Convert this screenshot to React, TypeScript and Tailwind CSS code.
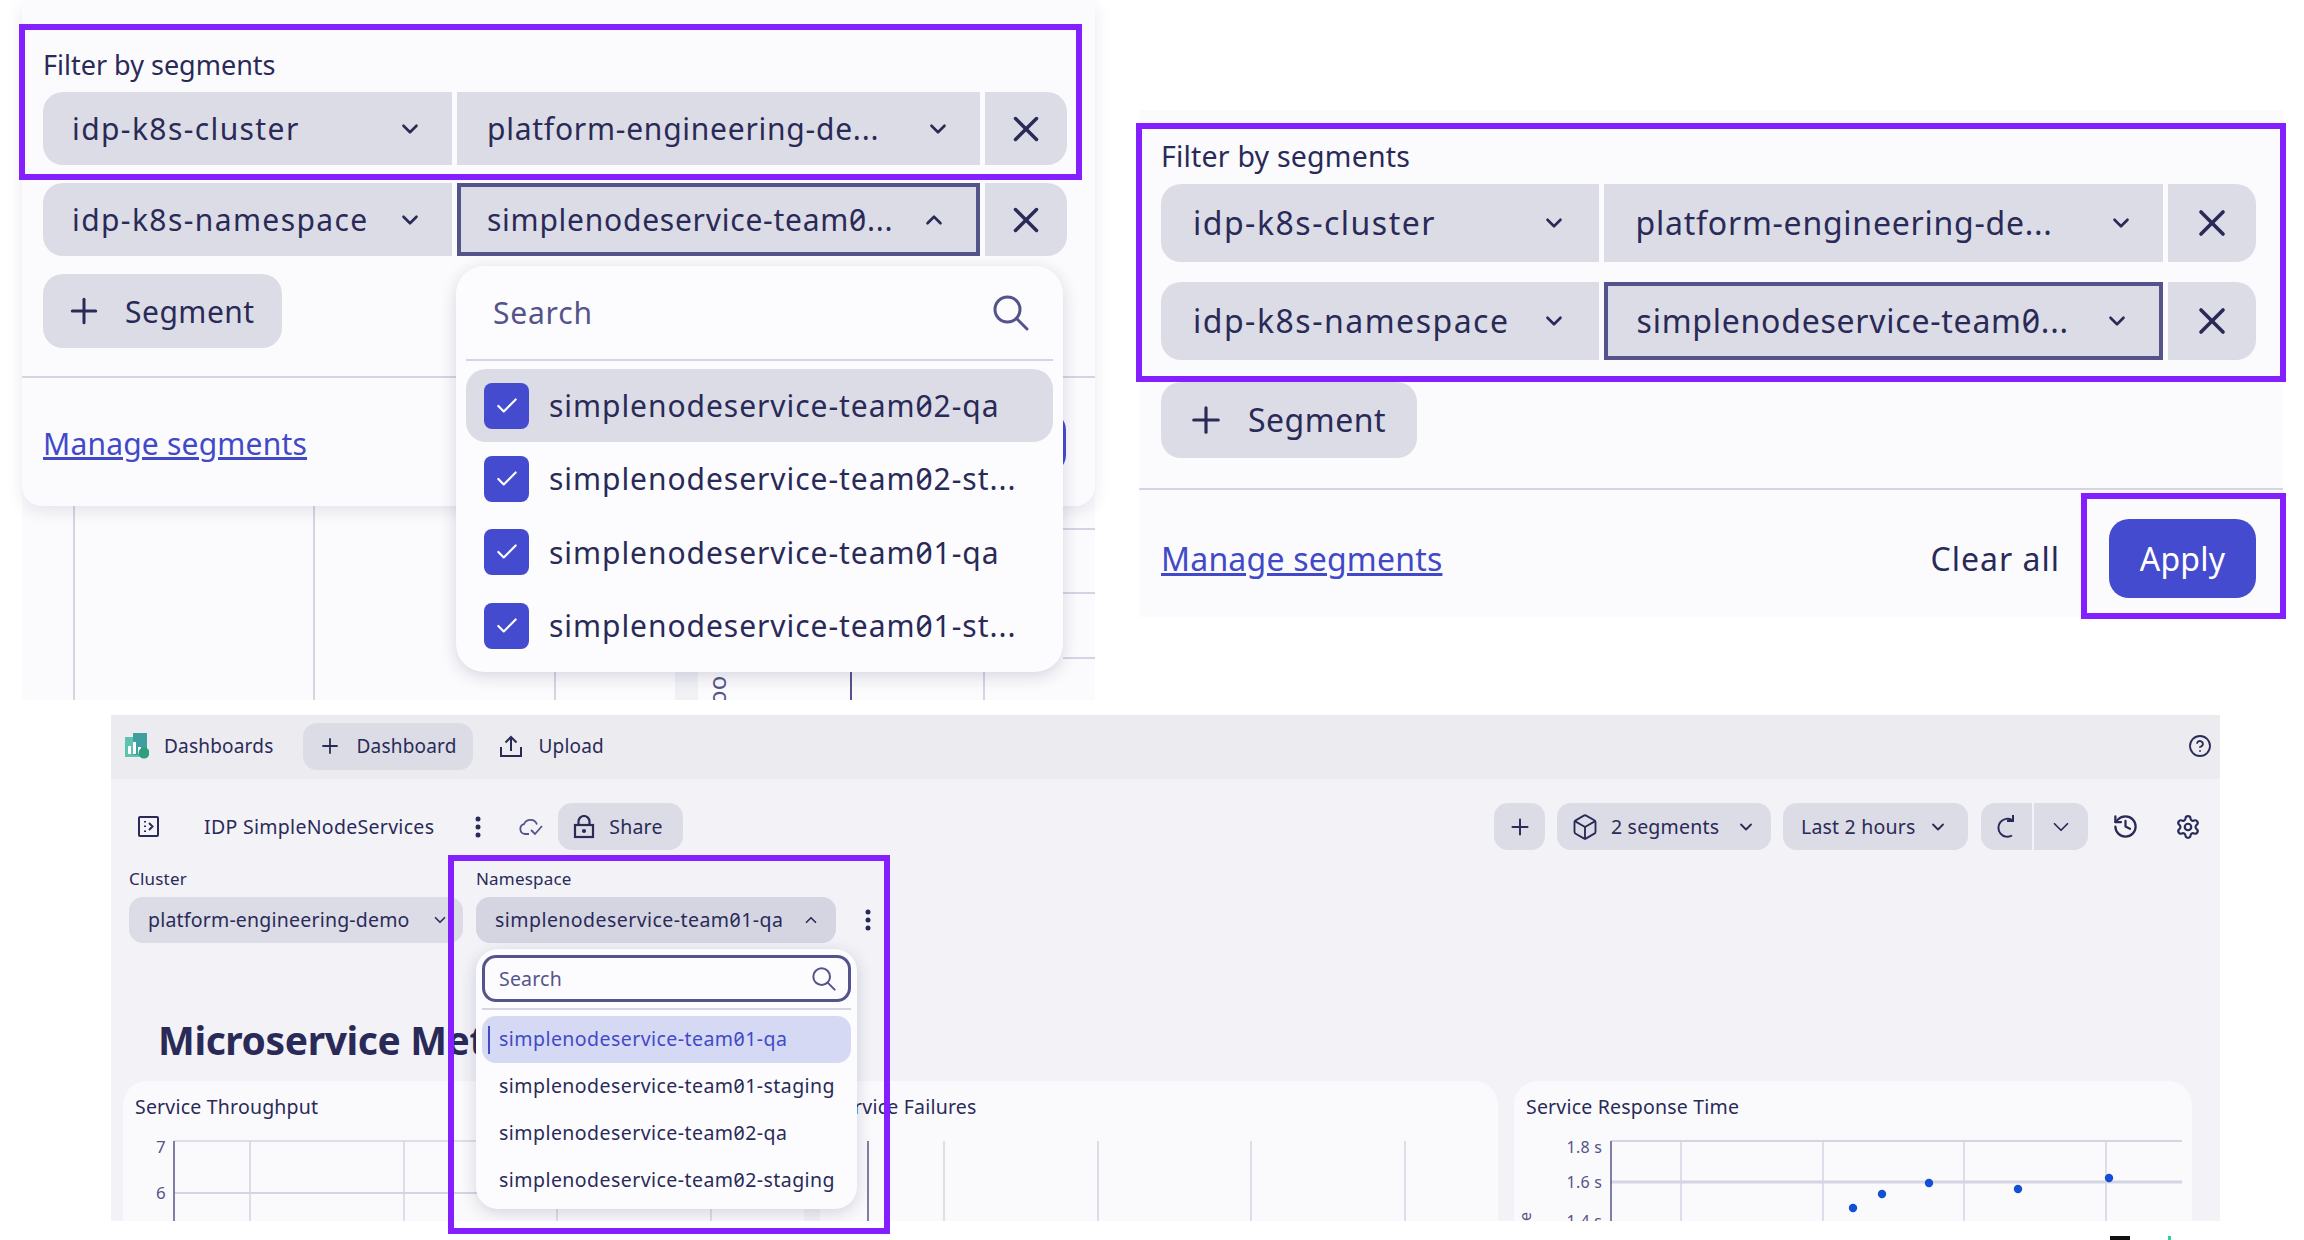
import { Box, Check, ChevronDown, ChevronUp, CircleHelp, History, Plus, Settings, X } from "lucide-react";

const ink = "text-[#2a2a58]";

function SearchIcon({ size }: { size: number }) {
  return (
    <svg width={size} height={size} viewBox="0 0 36 36" fill="none" stroke="currentColor" strokeWidth="3" strokeLinecap="round">
      <circle cx="14.5" cy="14.5" r="12.5" />
      <path d="M23.5 23.5L34 34" />
    </svg>
  );
}

function Dots() {
  return (
    <svg width="8" height="26" viewBox="0 0 8 26" fill="currentColor">
      <circle cx="4" cy="5" r="2.5" />
      <circle cx="4" cy="13" r="2.5" />
      <circle cx="4" cy="21" r="2.5" />
    </svg>
  );
}

function SegmentRow({ name, value, active, open, big }: { name: string; value: string; active?: boolean; open?: boolean; big?: boolean }) {
  const Chevron = open ? ChevronUp : ChevronDown;
  return (
    <div className={big ? "flex h-[78px] gap-[5px]" : "flex h-[73px] gap-[5px]"}>
      <div className={big ? "flex w-[438px] items-center justify-between rounded-l-[20px] bg-[#dcdce6] pl-[32px] pr-[32px]" : "flex w-[409px] items-center justify-between rounded-l-[20px] bg-[#dcdce6] pl-[29px] pr-[29px]"}>
        <span className={big ? "tracking-[1.5px]" : "tracking-[1.4px]"}>{name}</span>
        <ChevronDown size={26} strokeWidth={2.4} />
      </div>
      <div
        className={
          (big ? "w-[560px] pr-[29px] " : "w-[523px] pr-[29px] ") +
          "flex items-center justify-between bg-[#dcdce6] " +
          (active ? (big ? "border-[4px] border-[#54548a] pl-[29px]" : "border-[4px] border-[#54548a] pl-[26px]") : big ? "pl-[32px]" : "pl-[30px]")
        }
      >
        <span className="tracking-[0.75px]">{value}</span>
        <Chevron size={26} strokeWidth={2.4} />
      </div>
      <div className={big ? "flex w-[88px] items-center justify-center rounded-r-[20px] bg-[#dcdce6]" : "flex w-[82px] items-center justify-center rounded-r-[20px] bg-[#dcdce6]"}>
        <X size={big ? 44 : 42} strokeWidth={2} />
      </div>
    </div>
  );
}

function LeftChartLines() {
  return (
    <svg className="absolute left-0 top-[490px]" width="1073" height="210" viewBox="0 0 1073 210">
      <rect x="0" y="0" width="1073" height="210" fill="#fbfbfd" />
      <rect x="653" y="180" width="23" height="30" fill="#f0f0f5" />
      <g stroke="#d4d4e4" strokeWidth="2">
        <line x1="52" y1="0" x2="52" y2="210" />
        <line x1="292" y1="0" x2="292" y2="210" />
        <line x1="533" y1="0" x2="533" y2="210" />
        <line x1="962" y1="0" x2="962" y2="210" />
        <line x1="1041" y1="39" x2="1073" y2="39" />
        <line x1="1041" y1="103" x2="1073" y2="103" />
        <line x1="1041" y1="168" x2="1073" y2="168" />
      </g>
      <line x1="829" y1="0" x2="829" y2="210" stroke="#54548a" strokeWidth="2" />
      <text transform="translate(704 215) rotate(-90)" fontSize="24" fill="#54548a">
        oo
      </text>
    </svg>
  );
}

function LeftPanel() {
  return (
    <div className={"relative h-[700px] w-[1073px] text-[30px] tracking-[0.2px] " + ink}>
      <LeftChartLines />
      <div className="relative flex h-[506px] flex-col rounded-b-[20px] bg-[#fbfbfd] shadow-[0_6px_16px_rgba(40,40,90,0.1)]">
        <div className="flex flex-col pl-[21px] pr-[28px] pt-[45px]">
          <div className="mb-[7px] text-[27px] leading-[40px] tracking-[0px]">Filter by segments</div>
          <div className="flex flex-col gap-[18px]">
            <SegmentRow name="idp-k8s-cluster" value="platform-engineering-de..." />
            <SegmentRow name="idp-k8s-namespace" value="simplenodeservice-team0..." active open />
          </div>
          <div className="mt-[18px] flex h-[74px] w-[239px] items-center gap-[21px] rounded-[20px] bg-[#dcdce6] pl-[21px]">
            <Plus size={40} strokeWidth={1.8} />
            <span className="tracking-[0.5px]">Segment</span>
          </div>
        </div>
        <div className="mt-[28px] h-[2px] bg-[#d4d4e4]" />
        <div className="flex flex-1 items-center pl-[21px] pt-[2px]">
          <a className="text-[#4249c9] underline">Manage segments</a>
        </div>
        <div className="absolute left-[1020px] top-[412px] h-[61px] w-[24px] rounded-r-[18px] bg-[#454bcf]" />
      </div>
      <div className="absolute left-[434px] top-[266px] flex h-[406px] w-[607px] flex-col rounded-[28px] bg-[#fcfcfe] shadow-[0_4px_16px_rgba(40,40,90,0.18)]">
        <div className="flex h-[93px] items-center justify-between pl-[37px] pr-[34px] text-[#54548a]">
          <span className="tracking-[0.8px]">Search</span>
          <SearchIcon size={36} />
        </div>
        <div className="mx-[10px] h-[2px] bg-[#d4d4e4]" />
        <div className="mx-[6px] mt-[8px] flex flex-col">
          {["simplenodeservice-team02-qa", "simplenodeservice-team02-st...", "simplenodeservice-team01-qa", "simplenodeservice-team01-st..."].map((item, i) => (
            <div key={item} className={(i === 0 ? "bg-[#dcdce6] " : "") + "mx-[4px] flex h-[73.3px] items-center gap-[20px] rounded-[20px] pl-[18px]"}>
              <span className="flex h-[46px] w-[45px] items-center justify-center rounded-[8px] bg-[#454bcf]">
                <Check size={26} color="#ffffff" strokeWidth={2} />
              </span>
              <span className="tracking-[0.95px]">{item}</span>
            </div>
          ))}
        </div>
      </div>
    </div>
  );
}

function RightPanel() {
  return (
    <div className={"mt-[110px] flex h-[507px] w-[1144px] flex-col bg-[#fbfbfd] text-[32px] tracking-[0.2px] " + ink}>
      <div className="flex flex-col pl-[22px] pr-[27px] pt-[26px]">
        <div className="mb-[8px] text-[28.5px] leading-[40px]">Filter by segments</div>
        <div className="flex flex-col gap-[20px]">
          <SegmentRow big name="idp-k8s-cluster" value="platform-engineering-de..." />
          <SegmentRow big name="idp-k8s-namespace" value="simplenodeservice-team0..." active />
        </div>
        <div className="mt-[22px] flex h-[76px] w-[256px] items-center gap-[21px] rounded-[20px] bg-[#dcdce6] pl-[24px]">
          <Plus size={42} strokeWidth={1.8} />
          <span className="tracking-[0.5px]">Segment</span>
        </div>
      </div>
      <div className="mt-[30px] h-[2px] bg-[#d4d4e4]" />
      <div className="flex flex-1 items-center justify-between pl-[22px] pr-[27px] pt-[10px]">
        <a className="text-[#4249c9] underline">Manage segments</a>
        <div className="flex items-center gap-[49px]">
          <span className="tracking-[1px]">Clear all</span>
          <button className="h-[79px] w-[147px] rounded-[20px] bg-[#454bcf] text-[#ffffff]">Apply</button>
        </div>
      </div>
    </div>
  );
}

function ToolButton({ children, className }: { children: React.ReactNode; className: string }) {
  return <div className={"flex h-[47px] items-center rounded-[14px] bg-[#dcdce6] " + className}>{children}</div>;
}

function ThroughputChart() {
  return (
    <svg className="absolute left-0 top-0" width="681" height="140" viewBox="0 0 681 140">
      <g stroke="#d4d4e4" strokeWidth="1.5">
        <line x1="51" y1="60" x2="681" y2="60" />
        <line x1="51" y1="112" x2="681" y2="112" strokeWidth="2" />
        <line x1="127" y1="60" x2="127" y2="140" />
        <line x1="281" y1="60" x2="281" y2="140" />
        <line x1="434" y1="60" x2="434" y2="140" />
        <line x1="588" y1="60" x2="588" y2="140" />
      </g>
      <line x1="51" y1="60" x2="51" y2="140" stroke="#54548a" strokeWidth="1.5" />
      <g fill="#54548a" fontSize="17" textAnchor="end">
        <text x="43" y="72">7</text>
        <text x="43" y="118">6</text>
      </g>
    </svg>
  );
}

function FailuresChart() {
  return (
    <svg className="absolute left-0 top-0" width="678" height="140" viewBox="0 0 678 140">
      <g stroke="#d4d4e4" strokeWidth="1.5">
        <line x1="124" y1="60" x2="124" y2="140" />
        <line x1="278" y1="60" x2="278" y2="140" />
        <line x1="431" y1="60" x2="431" y2="140" />
        <line x1="585" y1="60" x2="585" y2="140" />
      </g>
      <line x1="48" y1="60" x2="48" y2="140" stroke="#54548a" strokeWidth="1.5" />
    </svg>
  );
}

function ResponseChart() {
  const dots = [
    [339, 127],
    [368, 113],
    [415, 102],
    [504, 108],
    [595, 97],
  ];
  return (
    <svg className="absolute left-0 top-0" width="678" height="140" viewBox="0 0 678 140">
      <g stroke="#d4d4e4" strokeWidth="1.5">
        <line x1="97" y1="60" x2="668" y2="60" strokeWidth="2" />
        <line x1="97" y1="101" x2="668" y2="101" strokeWidth="3" />
        <line x1="167" y1="60" x2="167" y2="140" />
        <line x1="309" y1="60" x2="309" y2="140" />
        <line x1="450" y1="60" x2="450" y2="140" />
        <line x1="592" y1="60" x2="592" y2="140" />
      </g>
      <line x1="97" y1="60" x2="97" y2="140" stroke="#54548a" strokeWidth="1.5" />
      {dots.map(([x, y]) => (
        <circle key={x} cx={x} cy={y} r="4.2" fill="#1450d2" />
      ))}
      <g fill="#54548a" fontSize="16" textAnchor="end">
        <text x="88" y="72">1.8 s</text>
        <text x="88" y="107">1.6 s</text>
        <text x="88" y="146">1.4 s</text>
      </g>
      <text transform="translate(17 140) rotate(-90)" fontSize="16" fill="#54548a">
        e
      </text>
    </svg>
  );
}

function DashboardPanel() {
  return (
    <div className={"relative ml-[111px] mt-[15px] h-[506px] w-[2109px] overflow-hidden bg-[#f2f2f7] text-[19.5px] tracking-[0.2px] " + ink}>
      <div className="flex h-[64px] items-center bg-[#ebebf0] pb-[2px] pl-[14px] pr-[10px] text-[19px]">
        <svg width="24" height="26" viewBox="0 0 24 26">
          <rect x="0" y="4" width="17" height="20" fill="#5cc4ae" />
          <rect x="8" y="0" width="14" height="22" fill="#3f9fa0" />
          <rect x="3" y="13" width="3" height="8" fill="#ffffff" />
          <rect x="8" y="9" width="3" height="12" fill="#ffffff" />
          <rect x="13" y="14" width="3" height="7" fill="#ffffff" />
          <circle cx="19" cy="20" r="5.5" fill="#2f9e7c" />
        </svg>
        <span className="ml-[15px]">Dashboards</span>
        <div className="ml-[30px] flex h-[47px] w-[170px] items-center gap-[14px] rounded-[14px] bg-[#dcdce6] pl-[15px]">
          <Plus size={24} strokeWidth={1.8} />
          <span>Dashboard</span>
        </div>
        <svg className="ml-[27px]" width="22" height="22" viewBox="0 0 22 22" fill="none" stroke="currentColor" strokeWidth="2">
          <path d="M1 12v9h20v-9" />
          <path d="M11 16V2M5.5 7.5L11 2l5.5 5.5" />
        </svg>
        <span className="ml-[16px]">Upload</span>
        <CircleHelp className="ml-auto mr-[-2px]" size={24} strokeWidth={1.8} />
      </div>
      <div className="flex items-center pl-[27px] pr-[19px] pt-[24px]">
        <svg width="21" height="21" viewBox="0 0 21 21" fill="none" stroke="currentColor" strokeWidth="2">
          <rect x="1" y="1" width="19" height="19" rx="1" />
          <path d="M7 5v1.5M7 9.5V11M7 14.5V16M11 7l3.5 3.5L11 14" />
        </svg>
        <span className="ml-[45px] tracking-[0.3px]">IDP SimpleNodeServices</span>
        <span className="ml-[40px] flex">
          <Dots />
        </span>
        <svg className="ml-[37px] text-[#54548a]" width="24" height="18" viewBox="0 0 24 18" fill="none" stroke="currentColor" strokeWidth="1.8">
          <path d="M10 16H6a5 5 0 0 1-1-9.8A7 7 0 0 1 18 6.5" />
          <path d="M12 12l4 4 7-8" />
        </svg>
        <ToolButton className="ml-[15px] w-[125px] gap-[14px] pl-[15px]">
          <svg width="22" height="24" viewBox="0 0 22 24" fill="none" stroke="currentColor" strokeWidth="2.2">
            <rect x="2" y="10" width="18" height="12" />
            <path d="M5.5 10V6.5a5.5 5.5 0 0 1 11 0V10" />
            <circle cx="11" cy="16" r="1" fill="currentColor" />
          </svg>
          <span>Share</span>
        </ToolButton>
        <ToolButton className="ml-auto w-[51px] justify-center">
          <Plus size={26} strokeWidth={1.8} />
        </ToolButton>
        <ToolButton className="ml-[12px] w-[214px] gap-[12px] pl-[14px]">
          <Box size={28} strokeWidth={1.6} />
          <span>2 segments</span>
          <ChevronDown className="ml-[5px]" size={20} strokeWidth={2.2} />
        </ToolButton>
        <ToolButton className="ml-[12px] w-[185px] gap-[12px] pl-[18px]">
          <span>Last 2 hours</span>
          <ChevronDown size={20} strokeWidth={2.2} />
        </ToolButton>
        <ToolButton className="ml-[13px] w-[107px] overflow-hidden">
          <span className="flex h-full w-[53px] items-center justify-center border-r-2 border-[#f2f2f7]">
            <svg width="22" height="26" viewBox="0 0 22 26" fill="none" stroke="currentColor" strokeWidth="2">
              <path d="M16 21.5A9 9 0 1 1 16 6" />
              <path d="M17 1v6h-6" />
            </svg>
          </span>
          <span className="flex h-full flex-1 items-center justify-center">
            <ChevronDown size={26} strokeWidth={1.6} />
          </span>
        </ToolButton>
        <History className="ml-[24px]" size={27} strokeWidth={2} />
        <Settings className="ml-[36px]" size={26} strokeWidth={2} />
      </div>
      <div className="mt-[18px] flex items-end gap-[13px] pl-[18px]">
        <div className="flex w-[334px] flex-col gap-[7px]">
          <span className="text-[17px] leading-[22px]">Cluster</span>
          <div className="flex h-[46px] items-center justify-between rounded-[14px] bg-[#dcdce6] pl-[19px] pr-[14px]">
            <span>platform-engineering-demo</span>
            <ChevronDown size={18} strokeWidth={2.2} />
          </div>
        </div>
        <div className="flex w-[360px] flex-col gap-[7px]">
          <span className="text-[17px] leading-[22px]">Namespace</span>
          <div className="flex h-[46px] items-center justify-between rounded-[14px] bg-[#d5d5e2] pl-[19px] pr-[16px]">
            <span className="tracking-[0.45px]">simplenodeservice-team01-qa</span>
            <ChevronUp size={18} strokeWidth={2.2} />
          </div>
        </div>
        <span className="mb-[10px] ml-[15px] flex">
          <Dots />
        </span>
      </div>
      <h1 className="mt-[72px] pl-[47px] text-[39px] font-bold leading-[50px] tracking-[-0.4px]">Microservice Metrics</h1>
      <div className="mt-[16px] grid grid-cols-[681px_678px_678px] gap-4 pl-[12px]">
        <div className="relative h-[140px] rounded-t-[24px] bg-[#fafafc] pl-[12px] pt-[11px]">
          <span>Service Throughput</span>
          <ThroughputChart />
        </div>
        <div className="relative h-[140px] rounded-t-[24px] bg-[#fafafc] pl-[12px] pt-[11px]">
          <span>Service Failures</span>
          <FailuresChart />
        </div>
        <div className="relative h-[140px] rounded-t-[24px] bg-[#fafafc] pl-[12px] pt-[11px]">
          <span>Service Response Time</span>
          <ResponseChart />
        </div>
      </div>
      <div className="absolute left-[365px] top-[234px] flex h-[260px] w-[381px] flex-col rounded-[22px] bg-[#fcfcfe] shadow-[0_4px_16px_rgba(40,40,90,0.18)]">
        <div className="mx-[6px] mt-[6px] flex h-[47px] items-center justify-between rounded-[14px] border-[3px] border-[#54548a] pl-[14px] pr-[12px] text-[#54548a]">
          <span>Search</span>
          <SearchIcon size={24} />
        </div>
        <div className="mx-[6px] mt-[6px] h-[1.5px] bg-[#d4d4e4]" />
        <div className="mx-[6px] mt-[6px] flex flex-col">
          {["simplenodeservice-team01-qa", "simplenodeservice-team01-staging", "simplenodeservice-team02-qa", "simplenodeservice-team02-staging"].map((item, i) => (
            <div key={item} className={(i === 0 ? "bg-[#d5d9f3] text-[#4249c9] " : "") + "relative flex h-[47px] items-center rounded-[14px] pl-[17px] tracking-[0.45px]"}>
              {i === 0 && <span className="absolute left-[6px] top-[10px] h-[28px] w-[2px] bg-[#4249c9]" />}
              <span>{item}</span>
            </div>
          ))}
        </div>
      </div>
    </div>
  );
}

export default function App() {
  return (
    <div className="relative h-[1240px] w-[2304px] overflow-hidden bg-[#ffffff] [font-family:'Noto_Sans',sans-serif] [font-feature-settings:'zero']">
      <div className="flex items-start gap-[44px] pl-[22px]">
        <LeftPanel />
        <RightPanel />
      </div>
      <DashboardPanel />
      {/* highlight boxes drawn over the composite */}
      <div className="absolute left-[19px] top-[24px] h-[156px] w-[1063px] border-[6px] border-[#8420ff]" />
      <div className="absolute left-[1136px] top-[123px] h-[259px] w-[1150px] border-[6px] border-[#8420ff]" />
      <div className="absolute left-[2081px] top-[493px] h-[126px] w-[205px] border-[6px] border-[#8420ff]" />
      <div className="absolute left-[448px] top-[855px] h-[379px] w-[442px] border-[6px] border-[#8420ff]" />
      <div className="absolute left-[2110px] top-[1236px] h-[4px] w-[20px] bg-[#111111]" />
      <div className="absolute left-[2168px] top-[1236px] h-[4px] w-[3px] bg-[#2fd39a]" />
    </div>
  );
}
